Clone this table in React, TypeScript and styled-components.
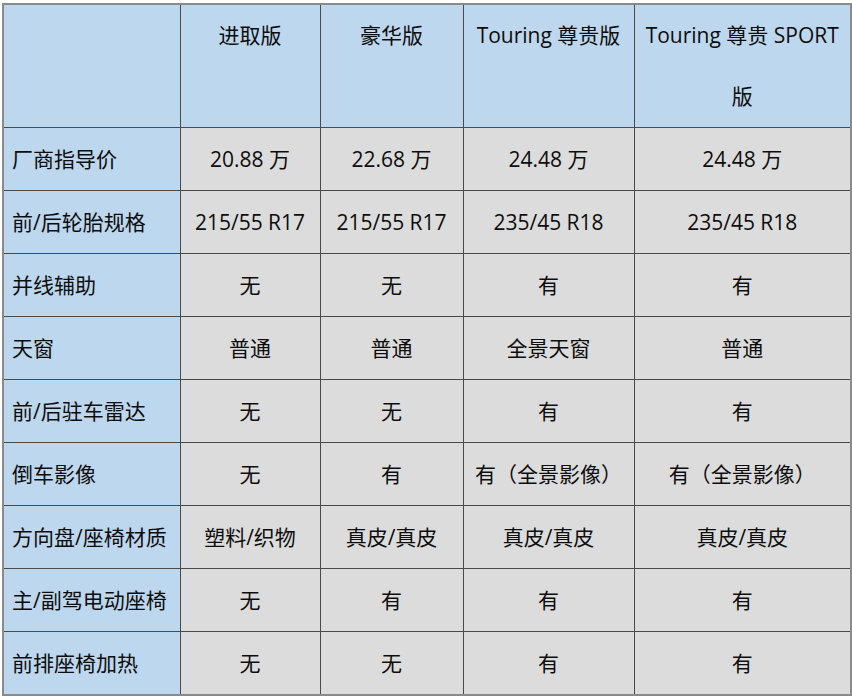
import React from 'react'
import styled, { createGlobalStyle } from 'styled-components'

const GlobalStyle = createGlobalStyle`
  html, body {
    margin: 0;
    padding: 0;
    background: #ffffff;
  }
  body {
    padding: 3px 2px 0 2px;
    font-family: "Open Sans", "Noto Sans CJK SC", sans-serif;
  }
`

const Table = styled.table`
  width: 848px;
  border-collapse: collapse;
  table-layout: fixed;
  border: 2px solid #8a8a8a;
  color: #0d0d0d;
  font-size: 21px;
`

const Cell = styled.td<{ $head?: boolean; $label?: boolean }>`
  border: 1px solid #4a4a4a;
  padding: 0 4px 0 ${(p) => (p.$label ? '8px' : '4px')};
  height: 62px;
  line-height: ${(p) => (p.$head ? '61px' : '62px')};
  text-align: ${(p) => (p.$label ? 'left' : 'center')};
  vertical-align: ${(p) => (p.$head ? 'top' : 'middle')};
  background: ${(p) => (p.$head || p.$label ? '#bdd7ee' : '#dcdcdc')};
  white-space: nowrap;
`

const HeadRow = styled.tr`
  height: 123px;
`

const cols = [177, 140, 143, 171, 217]

const rows: string[][] = [
  ['厂商指导价', '20.88 万', '22.68 万', '24.48 万', '24.48 万'],
  ['前/后轮胎规格', '215/55 R17', '215/55 R17', '235/45 R18', '235/45 R18'],
  ['并线辅助', '无', '无', '有', '有'],
  ['天窗', '普通', '普通', '全景天窗', '普通'],
  ['前/后驻车雷达', '无', '无', '有', '有'],
  ['倒车影像', '无', '有', '有（全景影像）', '有（全景影像）'],
  ['方向盘/座椅材质', '塑料/织物', '真皮/真皮', '真皮/真皮', '真皮/真皮'],
  ['主/副驾电动座椅', '无', '有', '有', '有'],
  ['前排座椅加热', '无', '无', '有', '有'],
]

export default function App() {
  return (
    <>
      <GlobalStyle />
      <Table>
        <colgroup>
          {cols.map((w, i) => (
            <col key={i} style={{ width: w }} />
          ))}
        </colgroup>
        <tbody>
          <HeadRow>
            <Cell $head />
            <Cell $head>进取版</Cell>
            <Cell $head>豪华版</Cell>
            <Cell $head>Touring 尊贵版</Cell>
            <Cell $head>
              Touring 尊贵 SPORT
              <br />版
            </Cell>
          </HeadRow>
          {rows.map((r) => (
            <tr key={r[0]}>
              {r.map((c, i) => (
                <Cell key={i} $label={i === 0}>
                  {c}
                </Cell>
              ))}
            </tr>
          ))}
        </tbody>
      </Table>
    </>
  )
}
